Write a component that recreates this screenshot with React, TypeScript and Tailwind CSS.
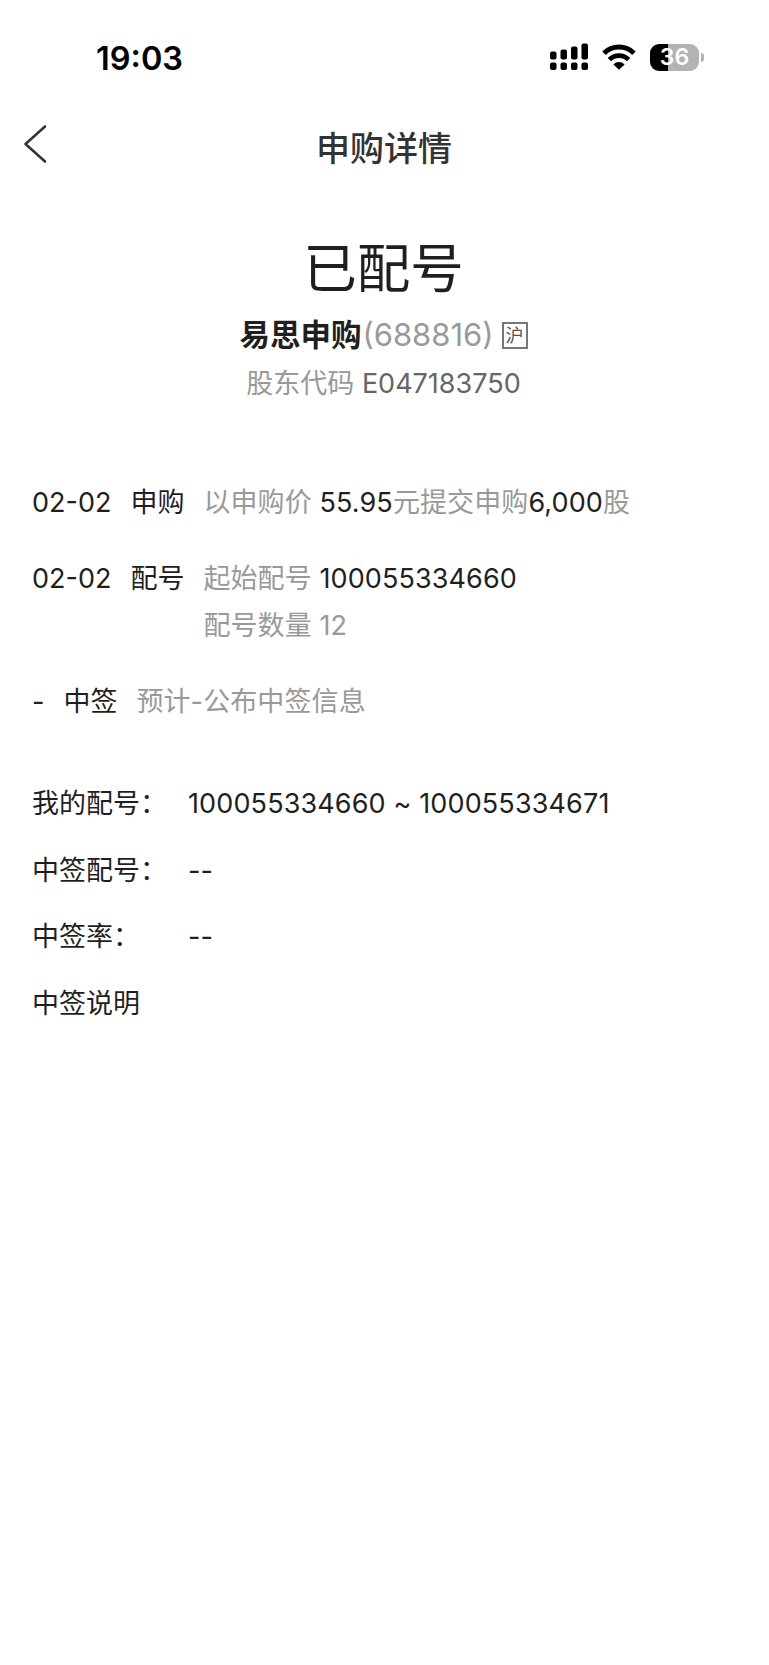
import type { ReactNode } from "react";

const timeline = [
  {
    date: "02-02",
    label: "申购",
    lines: [
      <>
        以申购价 <Strong>55.95</Strong>元提交申购<Strong>6,000</Strong>股
      </>,
    ],
  },
  {
    date: "02-02",
    label: "配号",
    lines: [
      <>
        起始配号 <Strong>100055334660</Strong>
      </>,
      "配号数量 12",
    ],
  },
  { date: "-", label: "中签", lines: ["预计-公布中签信息"] },
];

const details = [
  { label: "我的配号：", value: "100055334660 ~ 100055334671" },
  { label: "中签配号：", value: "--" },
  { label: "中签率：", value: "--" },
  { label: "中签说明", value: "" },
];

function Strong({ children }: { children: ReactNode }) {
  return <span className="text-[#1f1f1f]">{children}</span>;
}

function SignalIcon() {
  return (
    <svg width="39" height="28" viewBox="0 0 39 28">
      <rect x="0" y="8.5" width="6.5" height="8" rx="2" />
      <rect x="10.5" y="6.5" width="6.5" height="10" rx="2" />
      <rect x="21" y="3.5" width="6.5" height="13" rx="2" />
      <rect x="31.5" y="0.5" width="6.5" height="16" rx="2" />
      <rect x="0" y="19.5" width="6.5" height="7.5" rx="2" />
      <rect x="10.5" y="19.5" width="6.5" height="7.5" rx="2" />
      <rect x="21" y="19.5" width="6.5" height="7.5" rx="2" />
      <rect x="31.5" y="19.5" width="6.5" height="7.5" rx="2" />
    </svg>
  );
}

function WifiIcon() {
  return (
    <svg width="34" height="26" viewBox="0 0 34 26" fill="none" stroke="#000">
      <path d="M2 9.2A21.5 21.5 0 0 1 32 9.2" strokeWidth="5" />
      <path d="M7.4 15.6A13.6 13.6 0 0 1 26.6 15.6" strokeWidth="4.8" />
      <path
        d="M17 25.8L11.4 20.4A7.8 7.8 0 0 1 22.6 20.4Z"
        fill="#000"
        stroke="none"
      />
    </svg>
  );
}

function Battery() {
  return (
    <div className="flex items-center gap-0.5">
      <div className="flex h-[27px] w-[49px] items-center justify-center rounded-[9px] bg-linear-to-r from-black from-37% to-[#b3b3b3] to-37% pt-px font-semibold text-[23px] text-white leading-none">
        36
      </div>
      <div className="h-[9px] w-[3px] rounded-r-full bg-[#b3b3b3]" />
    </div>
  );
}

function StatusBar() {
  return (
    <div className="flex h-[114px] items-center justify-between pr-[65px] pl-[96px]">
      <span className="pt-[4px] font-semibold text-[32.5px] text-black">
        19:03
      </span>
      <div className="flex items-center">
        <SignalIcon />
        <div className="mr-[14px] ml-[13px]">
          <WifiIcon />
        </div>
        <Battery />
      </div>
    </div>
  );
}

function NavBar() {
  return (
    <header className="grid h-[70px] grid-cols-[80px_1fr_80px] items-center text-[#333]">
      <button type="button" aria-label="返回" className="-mt-[11px] pl-[23px]">
        <svg
          width="24"
          height="40"
          viewBox="0 0 24 40"
          fill="none"
          stroke="currentColor"
          strokeWidth="2.6"
          strokeLinecap="round"
          strokeLinejoin="round"
        >
          <path d="M22 2.5L2.5 20L22 37.5" />
        </svg>
      </button>
      <h1 className="pr-px text-center font-medium text-[34px] leading-none">
        申购详情
      </h1>
    </header>
  );
}

export default function App() {
  return (
    <div className="min-h-[1665px] bg-white font-['Inter','Noto_Sans_CJK_SC',sans-serif] text-[#1f1f1f]">
      <StatusBar />
      <NavBar />

      <section className="flex flex-col items-center pt-[50px]">
        <h2 className="pr-[2px] text-[53.5px] leading-[70px]">已配号</h2>
        <div className="mt-[5px] flex h-[52px] items-center pr-[2px]">
          <span className="mr-px font-bold text-[30.5px]">易思申购</span>
          <span className="text-[#999] text-[31px]">(688816)</span>
          <span className="mt-px ml-2 flex h-[27px] w-[26px] items-center justify-center border-2 border-[#777] text-[#555] text-[18px] leading-none">
            沪
          </span>
        </div>
        <p className="pt-px pr-[2px] text-[#999] text-[27px] leading-[44px]">
          股东代码 <span className="text-[#666]">E047183750</span>
        </p>
      </section>

      <section className="mt-[73px] flex flex-col gap-[29px] px-8 text-[27px] leading-[47px]">
        {timeline.map((item) => (
          <div key={item.label} className="flex gap-[19px]">
            <span>{item.date}</span>
            <span>{item.label}</span>
            <div className="text-[#999] tracking-[0.1px]">
              {item.lines.map((line, i) => (
                <p key={i}>{line}</p>
              ))}
            </div>
          </div>
        ))}
      </section>

      <dl className="mt-[46px] px-8 text-[27px]">
        {details.map((row) => (
          <div key={row.label} className="flex h-[66.5px] items-center">
            <dt className="w-[156px]">{row.label}</dt>
            <dd className="tracking-[0.13px]">{row.value}</dd>
          </div>
        ))}
      </dl>
    </div>
  );
}
